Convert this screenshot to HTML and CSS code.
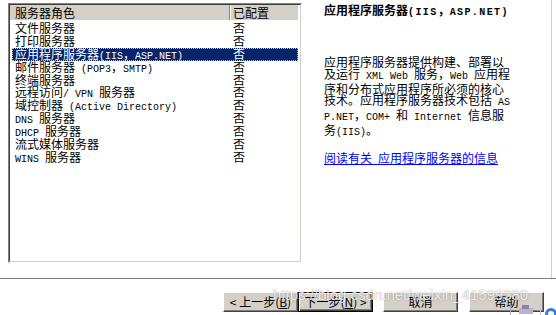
FILE: index.html
```html
<!DOCTYPE html>
<html lang="zh-CN">
<head>
    <meta charset="UTF-8">
    <meta name="viewport" content="width=device-width, initial-scale=1.0">
    <title>配置您的服务器</title>
    <link rel="stylesheet" href="styles.css">
</head>
<body>
    <div class="wizard">
        <div class="main">
            <!-- Lista de roles -->
            <div class="list-frame">
                <div class="list-box">
                    <div class="list-head">
                        <div class="col-name">服务器角色</div>
                        <div class="col-state">已配置</div>
                    </div>
                    <div class="rows">
                        <div class="row"><span class="name">文件服务器</span><span class="state">否</span></div>
                        <div class="row"><span class="name">打印服务器</span><span class="state">否</span></div>
                        <div class="row selected"><span class="name">应用程序服务器<span class="en">(IIS</span>，<span class="en">ASP.NET)</span></span><span class="state">否</span></div>
                        <div class="row"><span class="name">邮件服务器<span class="en"> (POP3</span>，<span class="en">SMTP)</span></span><span class="state">否</span></div>
                        <div class="row"><span class="name">终端服务器</span><span class="state">否</span></div>
                        <div class="row"><span class="name">远程访问<span class="en">/ VPN </span>服务器</span><span class="state">否</span></div>
                        <div class="row"><span class="name">域控制器<span class="en"> (Active Directory)</span></span><span class="state">否</span></div>
                        <div class="row"><span class="name"><span class="en">DNS </span>服务器</span><span class="state">否</span></div>
                        <div class="row"><span class="name"><span class="en">DHCP </span>服务器</span><span class="state">否</span></div>
                        <div class="row"><span class="name">流式媒体服务器</span><span class="state">否</span></div>
                        <div class="row"><span class="name"><span class="en">WINS </span>服务器</span><span class="state">否</span></div>
                    </div>
                </div>
            </div>

            <!-- Descripción del rol -->
            <div class="details">
                <h3>应用程序服务器<span class="en">(IIS</span>，<span class="en">ASP.NET)</span></h3>
                <p>应用程序服务器提供构建、部署以<br>及运行<span class="en"> XML Web </span>服务，<span class="en">Web </span>应用程<br>序和分布式应用程序所必须的核心<br>技术。应用程序服务器技术包括<span class="en"> AS</span><br><span class="en">P.NET</span>，<span class="en">COM+ </span>和<span class="en"> Internet </span>信息服<br>务<span class="en">(IIS)</span>。</p>
                <a href="#">阅读有关<span class="en"> </span>应用程序服务器的信息</a>
            </div>
        </div>

        <div class="buttons">
            <button class="btn">&lt; 上一步(<u>B</u>)</button>
            <button class="btn default">下一步(<u>N</u>) &gt;</button>
            <button class="btn cancel">取消</button>
            <button class="btn help">帮助</button>
        </div>

        <div class="watermark">https://blog.csdn.net/weixin_41599380</div>

        <svg class="tray" width="46" height="12" viewBox="0 0 46 12">
            <line x1="0.5" y1="0" x2="0.5" y2="12" stroke="#a8a8a8"/>
            <rect x="9" y="5" width="14" height="6" fill="#b8b4c8"/>
            <rect x="12" y="2" width="7" height="4" fill="#8a80b0"/>
            <line x1="30.5" y1="0" x2="30.5" y2="12" stroke="#c8c8c8"/>
            <circle cx="41" cy="11" r="6" fill="#3a7ad8"/>
            <circle cx="41" cy="11" r="3" fill="#fff"/>
        </svg>
    </div>
</body>
</html>
```

FILE: styles.css
```css
body {
    margin: 0;
    background: #ffffff;
    font-family: "Noto Sans CJK SC", sans-serif;
    font-size: 12px;
    color: #000;
}
.wizard {
    position: relative;
    width: 556px;
    height: 315px;
    overflow: hidden;
}
.en {
    font-family: "Liberation Mono", monospace;
    font-size: 10px;
}
.main {
    display: flex;
    width: 552px;
    height: 278px;
    box-sizing: border-box;
    border-right: 1px solid #d4d0c8;
}
.list-frame {
    margin: 3px 0 0 8px;
    width: 294px;
    height: 260px;
    box-sizing: border-box;
    border: 1px solid;
    border-color: #808080 #ffffff #ffffff #808080;
}
.list-box {
    height: 100%;
    box-sizing: border-box;
    border: 1px solid;
    border-color: #404040 #d4d0c8 #d4d0c8 #404040;
    padding-right: 2px;
}
.list-head {
    display: flex;
    height: 15px;
    line-height: 15px;
    background: #d4d0c8;
}
.col-name {
    width: 220px;
    box-sizing: border-box;
    padding-left: 5px;
    border-right: 1px solid #808080;
}
.col-state {
    flex: 1;
    padding-left: 2px;
    border-left: 1px solid #ffffff;
}
.rows {
    padding-top: 2px;
}
.row {
    display: flex;
    margin-left: 2px;
    height: 12.9px;
    line-height: 12.9px;
    white-space: nowrap;
}
.row .name {
    width: 218px;
    box-sizing: border-box;
    padding-left: 3px;
}
.row .state {
    padding-left: 3px;
}
.row.selected {
    background: #0a246a;
    color: #ffffff;
    outline: 1px dotted #c8c0a8;
    outline-offset: -1px;
}
.details {
    flex: 1;
    padding: 4px 0 0 22px;
    white-space: nowrap;
}
.details h3 {
    margin: 0;
    font-size: 12px;
    line-height: 12px;
    font-weight: 700;
}
.details h3 .en {
    font-weight: 700;
    letter-spacing: 1.4px;
}
.details p {
    margin: 37px 0 0;
    line-height: 11.8px;
}
.details a {
    display: block;
    margin-top: 13px;
    line-height: 11.8px;
    color: #0000ff;
    text-decoration: underline;
}
.buttons {
    display: flex;
    justify-content: flex-end;
    padding: 13px 12px 0 0;
    border-top: 1px solid #808080;
    box-shadow: inset 0 1px #ffffff;
}
.btn {
    width: 75px;
    height: 20px;
    padding: 0;
    background: #d4d0c8;
    font-family: "Noto Sans CJK SC", sans-serif;
    font-size: 12px;
    line-height: 18px;
    color: #000;
    border: 1px solid;
    border-color: #ffffff #404040 #404040 #ffffff;
    box-shadow: inset -1px -1px #808080;
}
.btn.default {
    border-color: #000;
    box-shadow: inset 1px 1px #ffffff, inset -1px -1px #404040, inset -2px -2px #808080;
}
.btn.cancel {
    margin-left: 10px;
}
.btn.help {
    margin-left: 11px;
}
.watermark {
    position: absolute;
    left: 273px;
    top: 286px;
    font-family: "Liberation Sans", sans-serif;
    font-size: 15px;
    color: rgba(255, 255, 255, 0.85);
    text-shadow: 0 0 1px rgba(0, 0, 0, 0.3), 0 0 2px rgba(0, 0, 0, 0.15);
    white-space: nowrap;
}
.tray {
    position: absolute;
    left: 510px;
    top: 303px;
}
```
